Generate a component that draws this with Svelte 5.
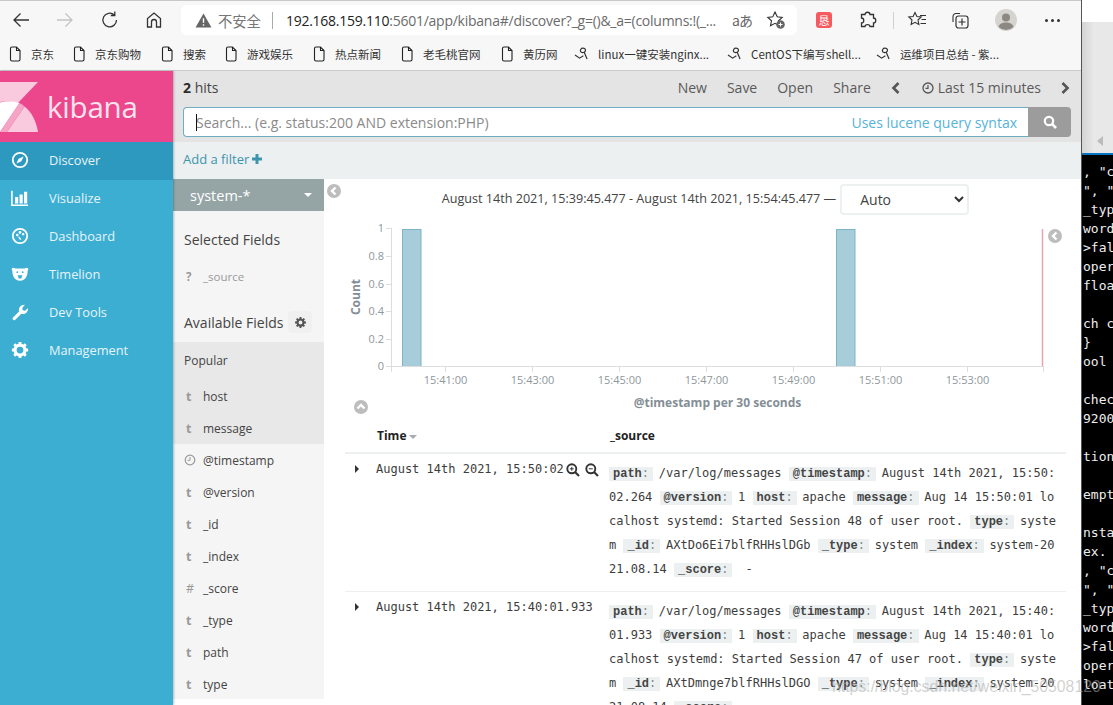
<script>
  const bookmarks = [
    { t: '京东', w: 42 }, { t: '京东购物', w: 66 }, { t: '搜索', w: 42 }, { t: '游戏娱乐', w: 66 },
    { t: '热点新闻', w: 66 }, { t: '老毛桃官网', w: 78 }
  ];
  const nav = ['Discover', 'Visualize', 'Dashboard', 'Timelion', 'Dev Tools', 'Management'];
  const popular = [['t', 'host'], ['t', 'message']];
  const fields = [['c', '@timestamp'], ['t', '@version'], ['t', '_id'], ['t', '_index'], ['#', '_score'], ['t', '_type'], ['t', 'path'], ['t', 'type']];
  const yTicks = [['1', 228], ['0.8', 256], ['0.6', 284], ['0.4', 311], ['0.2', 339], ['0', 366]];
  const xTicks = [['15:41:00', 445.5], ['15:43:00', 532.5], ['15:45:00', 619.5], ['15:47:00', 706.5], ['15:49:00', 793.5], ['15:51:00', 880.5], ['15:53:00', 967.5]];
  const rows = [
    { time: 'August 14th 2021, 15:50:02', tools: true, ts: 'August 14th 2021, 15:50:02.264', msg: 'Aug 14 15:50:01 localhost systemd: Started Session 48 of user root.', id: 'AXtDo6Ei7blfRHHslDGb' },
    { time: 'August 14th 2021, 15:40:01.933', tools: false, ts: 'August 14th 2021, 15:40:01.933', msg: 'Aug 14 15:40:01 localhost systemd: Started Session 47 of user root.', id: 'AXtDmnge7blfRHHslDGO' }
  ];
  const term = [', "c', '", "', '_typ', 'word', '>fal', 'oper', 'floa', '', 'ch c', '}', 'ool', '', 'chec', '9200', '', 'tion', '', 'empt', '', 'nsta', 'ex.', ', "c', '", "', '_typ', 'word', '>fal', 'oper', 'loat'];
</script>

<div class="screen">
  <div class="browser">
    <div class="toolbar">
      <div class="navbtns">
        <svg viewBox="0 0 20 20" class="ic"><path d="M18 10H3M9.500 3.500 3 10l6.500 6.500" fill="none" stroke="#333" stroke-width="1.300"/></svg>
        <svg viewBox="0 0 20 20" class="ic"><path d="M2 10h15M10.500 3.500 17 10l-6.500 6.500" fill="none" stroke="#c4c4c4" stroke-width="1.300"/></svg>
        <svg viewBox="0 0 20 20" class="ic"><path d="M16.500 10a6.800 6.800 0 1 1-2.200-5M14.800 1.500v4h-4" fill="none" stroke="#333" stroke-width="1.300"/></svg>
        <svg viewBox="0 0 20 20" class="ic"><path d="M3.500 17V8.500L10 3l6.500 5.500V17h-4v-5a2.500 2.500 0 0 0-5 0v5z" fill="none" stroke="#333" stroke-width="1.300"/></svg>
      </div>
      <div class="addr">
        <svg viewBox="0 0 18 16" class="warn"><path d="M9 0.500 17.500 15.500H0.500z" fill="#666"/><path d="M9 5.500v5M9 12v1.600" stroke="#fff" stroke-width="1.500"/></svg>
        <span class="insecure">不安全</span>
        <span class="sep"></span>
        <span class="url"><b>192.168.159.110</b>:5601/app/kibana#/discover?_g=()&amp;_a=(columns:!(_...</span>
        <span class="aa">aあ</span>
        <svg viewBox="0 0 20 20" class="star"><path d="M9 2l2.200 4.800 5 .6-3.700 3.400 1 5L9 13.300 4.500 15.800l1-5L1.800 7.400l5-.6z" fill="none" stroke="#333" stroke-width="1.100"/><circle cx="14.500" cy="14.500" r="4.300" fill="#666"/><path d="M14.500 12.500v4M12.500 14.500h4" stroke="#fff"/></svg>
      </div>
      <div class="exts">
        <span class="redext">恳</span>
        <svg viewBox="0 0 20 20" class="ic puzzle"><path d="M7 4.500c0-3 5-3 5 0h3.500v3.500c3 0 3 5 0 5v3.500H12c0-2.500-5-2.500-5 0H3.500V13c3 0 3-5 0-5V4.500z" fill="none" stroke="#333" stroke-width="1.300"/></svg>
        <span class="vdiv"></span>
        <svg viewBox="0 0 20 20" class="ic fav"><path d="M8 2.500l1.900 4 4.300.5-3.200 3 .9 4.500L8 12.300 4.100 14.500l.9-4.500L1.800 7l4.300-.5z" fill="none" stroke="#333" stroke-width="1.100"/><path d="M13 5.500h6M14.500 9.500h4.500M13.500 13.500h5.500" stroke="#333" stroke-width="1.100"/></svg>
        <svg viewBox="0 0 20 20" class="ic coll"><path d="M3 12V6.500a3 3 0 0 1 3-3h4" fill="none" stroke="#333" stroke-width="1.100"/><rect x="6" y="6" width="12" height="12" rx="2.500" fill="none" stroke="#333" stroke-width="1.200"/><path d="M12 8.500v7M8.500 12h7" stroke="#333" stroke-width="1.200"/></svg>
        <svg viewBox="0 0 22 22" class="avatar"><circle cx="11" cy="11" r="11" fill="#d5d4d0"/><circle cx="11" cy="8.500" r="4" fill="#8c8983"/><path d="M3.500 18c1-3.500 4-4.500 7.500-4.500s6.500 1 7.500 4.500a11 11 0 0 1-15 0z" fill="#8c8983"/></svg>
        <span class="dots"><i></i><i></i><i></i></span>
      </div>
    </div>

    <div class="bookmarks">
      {#each bookmarks as b}
        <span class="bm" style="width:{b.w}px">
          <svg viewBox="0 0 12 16" class="doc"><path d="M1.500 2.500a1.500 1.500 0 0 1 1.500-1.500h4.500l3.500 3.500v9a1.500 1.500 0 0 1-1.500 1.500H3a1.500 1.500 0 0 1-1.500-1.500zM7.500 1v3.500H11" fill="none" stroke="#222" stroke-width="1.100"/></svg>
          <span>{b.t}</span>
        </span>
      {/each}
      <span class="bm hl">
        <svg viewBox="0 0 12 16" class="doc"><path d="M1.500 2.500a1.500 1.500 0 0 1 1.500-1.500h4.500l3.500 3.500v9a1.500 1.500 0 0 1-1.500 1.500H3a1.500 1.500 0 0 1-1.500-1.500zM7.500 1v3.500H11" fill="none" stroke="#222" stroke-width="1.100"/></svg>
        <span>黄历网</span>
      </span>
      {#each ['linux一键安装nginx...', 'CentOS下编写shell...', '运维项目总结 - 紫...'] as t}
        <span class="bm link">
          <svg viewBox="0 0 16 14" class="cs"><path d="M1 8.500 6 12l4-2.500M8 1.500c2.500-1 5 .5 4 3-.6 1.500-3 2-4.500 1-1.200-.9-.6-3.300.5-4zM11 6l3 7" fill="none" stroke="#333" stroke-width="1.300"/></svg>
          <span>{t}</span>
        </span>
      {/each}
    </div>

    <div class="kibana">
      <aside class="side">
        <div class="logo">
          <svg viewBox="0 0 38 50" class="mark">
            <path d="M0 0H38L18 21C12 19 6 19 0 20z" fill="#f9c9dd"/>
            <path d="M0 20.500C7 18.500 14 19 19.500 21L0 50z" fill="#fff"/>
            <path d="M24.500 24.500C31 29.500 36 38 38 50H7z" fill="#f9c9dd"/>
            <path d="M19.500 21c2 .8 3.500 2 5 3.500L7 50H0z" fill="#f5a4c6"/>
          </svg>
          <span>kibana</span>
        </div>
        <nav>
          {#each nav as n, i}
            <div class="navitem" class:active={i === 0}>
              <svg viewBox="0 0 20 20" class="navic">
                {#if i === 0}
                  <circle cx="10" cy="10" r="8" fill="none" stroke="#fff" stroke-width="2"/><path d="M14 6l-2.500 5.500L6 14l2.500-5.500z" fill="#fff"/>
                {:else if i === 1}
                  <path d="M1 2v16h18" fill="none" stroke="#fff" stroke-width="1.800"/><path d="M4.500 9h3.500v7H4.500zM9.500 6H13v10H9.500zM14.500 3H18v13h-3.500z" fill="#fff"/>
                {:else if i === 2}
                  <circle cx="10" cy="10" r="8" fill="none" stroke="#fff" stroke-width="2"/><circle cx="7" cy="9" r="1.500" fill="#fff"/><circle cx="10" cy="6" r="1.500" fill="#fff"/><circle cx="13.500" cy="8" r="1.300" fill="#fff"/><path d="M9 10.500l2.500 3-1.500 1-2-3z" fill="#fff"/>
                {:else if i === 3}
                  <path d="M1 4c1-1.500 2.500-1 3.500 0h11c1-1 2.500-1.500 3.500 0 .5 1 0 2-.5 2.500 0 5-2 11-8.500 11S1.500 11.500 1.500 6.500C1 6 .5 5 1 4z" fill="#fff"/><circle cx="7" cy="8" r="1" fill="#3caed2"/><circle cx="13" cy="8" r="1" fill="#3caed2"/><path d="M7.500 11.500h5l-1 3.500h-3z" fill="#3caed2"/>
                {:else if i === 4}
                  <path d="M2 16.500 9 9.500C8 6 10.500 1.500 15.500 2L12.500 5.500l.5 2.500 2.500.5L19 5.500c.3 5-4 7.500-7.500 6.500l-7 7c-1.500 1-3.500-1-2.500-2.500z" fill="#fff"/>
                {:else}
                  <circle cx="10" cy="10" r="5.500" fill="none" stroke="#fff" stroke-width="3.500"/>
                  <path d="M10 1v3M10 16v3M1 10h3M16 10h3M3.600 3.600l2.200 2.200M14.200 14.200l2.200 2.200M3.600 16.400l2.200-2.200M14.200 5.800l2.200-2.200" stroke="#fff" stroke-width="3.200"/>
                {/if}
              </svg>
              <span>{n}</span>
            </div>
          {/each}
        </nav>
      </aside>

      <main class="app">
        <header class="topbar">
          <div class="toprow">
            <span class="hits"><b>2</b> hits</span>
            <div class="menu">
              <span>New</span><span>Save</span><span>Open</span><span>Share</span>
              <svg viewBox="0 0 10 14" class="chev first"><path d="M7.500 2 2.500 7l5 5" fill="none" stroke="#555" stroke-width="2.600"/></svg>
              <span class="timepick">
                <svg viewBox="0 0 12 12" class="clock"><circle cx="6" cy="6" r="5" fill="none" stroke="#555" stroke-width="1.300"/><path d="M6 3v3.300H3.500" fill="none" stroke="#555" stroke-width="1.200"/></svg>
                Last 15 minutes
              </span>
              <svg viewBox="0 0 10 14" class="chev last"><path d="M2.500 2l5 5-5 5" fill="none" stroke="#555" stroke-width="2.600"/></svg>
            </div>
          </div>
          <div class="search">
            <div class="input">
              <i class="cursor"></i>
              <span class="ph">Search... (e.g. status:200 AND extension:PHP)</span>
              <span class="lucene">Uses lucene query syntax</span>
            </div>
            <div class="sbtn">
              <svg viewBox="0 0 14 14" width="14" height="14"><circle cx="6" cy="6" r="4.200" fill="none" stroke="#fff" stroke-width="2.200"/><path d="M9.200 9.200 13 13" stroke="#fff" stroke-width="2.600"/></svg>
            </div>
          </div>
        </header>
        <div class="filter">Add a filter <svg viewBox="0 0 10 10" width="10" height="10"><path d="M5 0v10M0 5h10" stroke="#3d94ad" stroke-width="3"/></svg></div>

        <div class="body">
          <section class="fields">
            <div class="pattern"><span>system-*</span><i class="tri"></i></div>
            <h3 class="sel">Selected Fields</h3>
            <div class="srcfield"><b>?</b><span>_source</span></div>
            <div class="avail"><h3>Available Fields</h3>
              <span class="gearbtn"><svg viewBox="0 0 20 20" width="11" height="11"><circle cx="10" cy="10" r="5.500" fill="none" stroke="#555" stroke-width="4"/><path d="M10 0v4M10 16v4M0 10h4M16 10h4M3 3l3 3M14 14l3 3M3 17l3-3M14 6l3-3" stroke="#555" stroke-width="3.500"/></svg></span>
            </div>
            <div class="popular">
              <div class="pophead">Popular</div>
              {#each popular as f}
                <div class="frow"><b>{f[0]}</b><span>{f[1]}</span></div>
              {/each}
            </div>
            {#each fields as f}
              <div class="frow">
                {#if f[0] === 'c'}
                  <svg viewBox="0 0 12 12" class="fclock"><circle cx="6" cy="6" r="4.800" fill="none" stroke="#999" stroke-width="1.200"/><path d="M6 3v3.300H3.500" fill="none" stroke="#999"/></svg>
                {:else}
                  <b class:hash={f[0] === '#'}>{f[0]}</b>
                {/if}
                <span>{f[1]}</span>
              </div>
            {/each}
          </section>

          <section class="content">
            <div class="round left1"><svg viewBox="0 0 14 14"><circle cx="7" cy="7" r="7" fill="#bdbdbd"/><path d="M8.500 3.500 5 7l3.500 3.500" fill="none" stroke="#fff" stroke-width="2.400"/></svg></div>
            <div class="round left2"><svg viewBox="0 0 14 14"><circle cx="7" cy="7" r="7" fill="#bdbdbd"/><path d="M8.500 3.500 5 7l3.500 3.500" fill="none" stroke="#fff" stroke-width="2.400"/></svg></div>
            <div class="round up"><svg viewBox="0 0 14 14"><circle cx="7" cy="7" r="7" fill="#bdbdbd"/><path d="M3.500 8.500 7 5l3.500 3.500" fill="none" stroke="#fff" stroke-width="2.400"/></svg></div>

            <div class="range">
              <span>August 14th 2021, 15:39:45.477 - August 14th 2021, 15:54:45.477 —</span>
              <div class="selwrap">
                <select><option>Auto</option></select>
                <svg viewBox="0 0 10 7" class="selchev"><path d="M1 1l4 4 4-4" fill="none" stroke="#333" stroke-width="2"/></svg>
              </div>
            </div>

            <svg class="chart" viewBox="345 220 721 200" width="721" height="200">
              <rect x="402.500" y="229.500" width="18.500" height="137" fill="#a6cdd9" stroke="#7db5c6"/>
              <rect x="836.500" y="229.500" width="18.500" height="137" fill="#a6cdd9" stroke="#7db5c6"/>
              <path d="M391.500 228.500V366.500H1043" fill="none" stroke="#ddd"/>
              <path d="M391.500 366v6M1043.500 366v6" stroke="#ddd"/>
              {#each yTicks as t}
                <path d="M386 {t[1] + .5}h6" stroke="#ddd"/>
                <text x="384" y={t[1] + 4} text-anchor="end" class="tick">{t[0]}</text>
              {/each}
              {#each xTicks as t}
                <path d="M{t[1]} 366v6" stroke="#ddd"/>
                <text x={t[1]} y="384" text-anchor="middle" class="tick">{t[0]}</text>
              {/each}
              <path d="M1042.500 229v137" stroke="#e8a4ac" stroke-width="1.500"/>
              <text x="360" y="297" transform="rotate(-90 360 297)" text-anchor="middle" class="axis">Count</text>
              <text x="717.500" y="407" text-anchor="middle" class="axis">@timestamp per 30 seconds</text>
            </svg>

            <div class="thead">
              <span class="th timeh">Time <i class="sort"></i></span>
              <span class="th">_source</span>
            </div>

            {#each rows as r}
              <article class="row">
                <svg viewBox="0 0 6 8" class="caret"><path d="M1 0l4 4-4 4z" fill="#333"/></svg>
                <div class="tcell">
                  <span>{r.time}</span>
                  {#if r.tools}
                    <span class="tools">
                      <svg viewBox="0 0 14 14"><circle cx="5.800" cy="5.800" r="4.500" fill="none" stroke="#333" stroke-width="1.900"/><path d="M9 9l4 4" stroke="#333" stroke-width="2.200"/><path d="M5.800 3.800v4M3.800 5.800h4" stroke="#333"/></svg>
                      <svg viewBox="0 0 14 14"><circle cx="5.800" cy="5.800" r="4.500" fill="none" stroke="#333" stroke-width="1.900"/><path d="M9 9l4 4" stroke="#333" stroke-width="2.200"/><path d="M3.800 5.800h4" stroke="#333"/></svg>
                    </span>
                  {/if}
                </div>
                <div class="src"><span class="k">path<i>:</i></span> /var/log/messages <span class="k">@timestamp<i>:</i></span> {r.ts} <span class="k">@version<i>:</i></span> 1 <span class="k">host<i>:</i></span> apache <span class="k">message<i>:</i></span> {r.msg} <span class="k">type<i>:</i></span> system <span class="k">_id<i>:</i></span> {r.id} <span class="k">_type<i>:</i></span> system <span class="k">_index<i>:</i></span> system-2021.08.14 <span class="k">_score<i>:</i></span> &nbsp;-</div>
              </article>
            {/each}
          </section>
        </div>
      </main>
    </div>
  </div>

  <div class="desktop">
    <div class="deskbar"><svg viewBox="0 0 6 10" width="6" height="10"><path d="M6 0v10L0 5z" fill="#bbb"/></svg></div>
    <div class="terminal">
      {#each term as l}<div class="tl">{l || ' '}</div>{/each}
    </div>
  </div>

  <div class="watermark">https://blog.csdn.net/weixin_50508120</div>
</div>

<style>
  :global(body) { margin: 0; background: #fff; }
  .screen { width: 1113px; height: 705px; display: flex; overflow: hidden; position: relative; font-family: "Open Sans", sans-serif; }
  .browser { width: 1081px; flex: none; display: flex; flex-direction: column; background: #f7f7f7; border-top: 1px solid #c8c8c8; box-sizing: border-box; height: 705px; overflow: hidden; box-shadow: 1px 0 0 #555; position: relative; z-index: 1; }

  .toolbar { height: 36px; padding-top: 2px; box-sizing: border-box; display: flex; align-items: center; flex: none; }
  .navbtns { display: flex; gap: 24.300px; padding-left: 11px; width: 181px; box-sizing: border-box; }
  .ic { width: 20px; height: 20px; flex: none; }
  .addr { width: 616px; height: 30px; background: #fff; border-radius: 6px; display: flex; align-items: center; flex: none; position: relative; }
  .warn { width: 17px; height: 15px; margin-left: 14px; flex: none; }
  .insecure { font: 14.300px "Noto Sans CJK SC", sans-serif; color: #777; margin-left: 6px; }
  .sep { width: 1px; height: 17px; background: #aaa; margin-left: 11px; }
  .url { font: 14px "Open Sans", sans-serif; color: #6b6b6b; margin-left: 13px; white-space: nowrap; letter-spacing: -.25px; }
  .url b { font-weight: 400; color: #222; }
  .aa { position: absolute; left: 551px; font: 14px "Noto Sans CJK JP", sans-serif; color: #666; letter-spacing: -1px; }
  .star { position: absolute; left: 585px; top: 5px; width: 20px; height: 20px; }
  .exts { flex: 1; position: relative; display: flex; align-items: center; }
  .redext { width: 16px; height: 16px; background: #f55a5f; border-radius: 3px; color: #fff; font: 11px/16px "Noto Sans CJK SC", sans-serif; text-align: center; margin-left: 19px; flex: none; }
  .puzzle { margin-left: 26px; }
  .vdiv { width: 1px; height: 17px; background: #d0d0d0; margin-left: 15px; flex: none; }
  .fav { margin-left: 13px; }
  .coll { margin-left: 23px; }
  .avatar { width: 22px; height: 22px; margin-left: 25px; flex: none; }
  .dots { display: flex; gap: 3px; margin-left: 28px; }
  .dots i { width: 3px; height: 3px; border-radius: 50%; background: #333; }

  .bookmarks { height: 34px; border-bottom: 1px solid #ccc; box-sizing: border-box; display: flex; align-items: center; padding-left: 9px; gap: 22px; flex: none; font: 11.500px "Noto Sans CJK SC", sans-serif; color: #333; white-space: nowrap; }
  .bm { display: inline-flex; align-items: center; gap: 10px; flex: none; }
  .hl { width: 51px; }
  .link { gap: 9px; }
  .link + .link { margin-left: -4px; }
  .link + .link + .link { margin-left: -7px; }
  .doc { width: 12px; height: 16px; flex: none; }
  .cs { width: 15px; height: 13px; flex: none; }

  .kibana { flex: 1; display: flex; min-height: 0; }
  .side { width: 173px; flex: none; background: #3caed2; color: #fff; box-shadow: 1px 0 2px rgba(0,0,0,.25); position: relative; z-index: 2; }
  .logo { height: 71px; background: #ec468c; display: flex; align-items: center; overflow: hidden; }
  .mark { width: 38px; height: 50px; margin-top: 1px; flex: none; }
  .logo span { color: #fce4ee; font-size: 29.500px; margin-left: 9px; line-height: 1; letter-spacing: -.2px; }
  .navitem { height: 38px; box-sizing: border-box; padding-bottom: 2px; display: flex; align-items: center; padding-left: 11px; font-size: 12.800px; color: #e6f4f9; }
  .navitem.active { background: #2e99bf; }
  .navic { width: 18px; height: 18px; margin-right: 20px; flex: none; }

  .app { flex: 1; min-width: 0; display: flex; flex-direction: column; background: #fff; }
  .topbar { background: #e4e4e4; height: 71px; padding: 0 10px; flex: none; box-sizing: border-box; }
  .toprow { display: flex; justify-content: space-between; height: 33px; margin-bottom: 3px; align-items: center; color: #555; font-size: 14px; }
  .hits { color: #444; }
  .hits b { color: #2d2d2d; }
  .menu { display: flex; align-items: center; color: #5a5a5a; }
  .menu span { margin-right: 20px; }
  .chev { width: 10px; height: 14px; flex: none; }
  .chev.first { margin-right: 21px; }
  .chev.last { margin: 0 1px 0 -1px; }
  .menu .timepick { margin-right: 20px; display: inline-flex; align-items: center; gap: 4px; }
  .clock { width: 12px; height: 12px; }
  .search { display: flex; height: 30px; }
  .input { flex: 1; background: #fff; border: 1px solid #6eadc1; border-right: 0; border-radius: 4px 0 0 4px; display: flex; align-items: center; justify-content: space-between; padding: 0 11px 0 12px; position: relative; box-sizing: border-box; }
  .cursor { position: absolute; left: 12px; top: 6px; width: 1px; height: 17px; background: #111; }
  .ph { color: #8a8a8a; font-size: 14px; }
  .lucene { color: #56b3d8; font-size: 14px; }
  .sbtn { width: 43px; background: #9c9c9c; border-radius: 0 4px 4px 0; display: flex; align-items: center; justify-content: center; }
  .filter { height: 37px; background: #ecf0f1; color: #3d94ad; font-size: 13px; line-height: 35px; padding-left: 10px; flex: none; }
  .filter svg { margin-left: -1px; }

  .body { flex: 1; display: flex; min-height: 0; }
  .fields { width: 151px; flex: none; background: #f5f5f5; height: 520px; font-size: 12.500px; color: #444; }
  .pattern { height: 32px; background: #95a5a6; color: #fff; display: flex; align-items: center; justify-content: space-between; padding: 0 12px 0 17px; font-size: 14.500px; }
  .tri { width: 0; height: 0; border: 4px solid transparent; border-top-color: #fff; border-bottom: 0; }
  .fields h3 { font-size: 14px; font-weight: 400; margin: 0; color: #444; }
  .sel { padding: 20px 0 0 11px; line-height: 18px; }
  .srcfield { display: flex; margin-top: 19px; padding-left: 13px; color: #999; font-size: 11.500px; line-height: 18px; }
  .srcfield b { width: 17px; color: #999; }
  .avail { display: flex; align-items: center; padding-left: 11px; margin-top: 24px; height: 24px; }
  .gearbtn { width: 24px; height: 22px; background: #f0f0f0; border-radius: 4px; margin-left: 5px; display: flex; align-items: center; justify-content: center; }
  .popular { background: #e8e8e8; margin-top: 8px; }
  .pophead { height: 38px; line-height: 37px; padding-left: 11px; font-size: 12px; }
  .frow { height: 32px; display: flex; align-items: center; padding-left: 13px; }
  .frow b { width: 17px; color: #999; font-size: 12.500px; flex: none; }
  .frow b.hash { font-weight: 400; }
  .frow span { font-size: 12px; color: #444; }
  .fclock { width: 12px; height: 12px; margin-left: -2px; margin-right: 7px; flex: none; }

  .content { flex: 1; min-width: 0; position: relative; padding: 0 15px 0 21px; overflow: hidden; }
  .round { position: absolute; width: 14px; height: 14px; }
  .round svg { display: block; width: 14px; height: 14px; }
  .left1 { left: 3px; top: 5px; }
  .left2 { left: 724px; top: 50px; }
  .up { left: 30px; top: 221px; }
  .range { height: 41px; display: flex; align-items: flex-start; justify-content: center; gap: 4px; font-size: 12.600px; line-height: 17px; color: #444; box-sizing: border-box; }
  .range > span { margin-top: 10.500px; }
  .selwrap { position: relative; }
  select { appearance: none; display: block; width: 129px; height: 31px; border: 2px solid #ecf0f1; border-radius: 4px; background: #fff; font: 14px "Open Sans", sans-serif; color: #444; padding-left: 18px; margin-top: 5px; }
  .selchev { position: absolute; right: 5px; top: 17px; width: 10px; height: 7px; }
  .chart { display: block; }
  .tick { font-size: 11px; fill: #8f979c; font-family: "Open Sans", sans-serif; }
  .axis { font-size: 12px; font-weight: 700; fill: #848e96; font-family: "Open Sans", sans-serif; }
  .thead { height: 34px; border-bottom: 2px solid #ecf0f1; display: grid; grid-template-columns: 233px 1fr; padding: 7px 0 0 32px; box-sizing: border-box; font-size: 12px; color: #222; }
  .th { font-weight: 700; line-height: 18px; }
  .sort { display: inline-block; width: 0; height: 0; border: 4px solid transparent; border-top-color: #aaa; border-bottom: 0; vertical-align: 1px; margin-left: -1px; }
  .row { display: grid; grid-template-columns: 31px 233px 1fr; border-bottom: 1px solid #ecf0f1; padding-top: 7px; padding-bottom: 10px; font: 12px "DejaVu Sans Mono", monospace; color: #3d3d3d; }
  .caret { width: 6px; height: 8px; margin: 4px 0 0 9px; }
  .tcell { line-height: 16px; position: relative; white-space: nowrap; }
  .tools { position: absolute; left: 190px; top: 2px; display: flex; gap: 5px; }
  .tools svg { width: 14px; height: 14px; }
  .src { line-height: 24px; word-break: break-all; width: 450px; }
  .k { background: #ecf0f1; padding: 0 4px; margin-right: -1.500px; line-height: 1; font-family: "Liberation Mono", monospace; font-weight: 700; color: #444; }
  .k i { font-style: normal; font-weight: 400; color: #888; }

  .desktop { flex: 1; display: flex; flex-direction: column; min-width: 0; overflow: hidden; background: linear-gradient(#fff 22px, transparent 22px); }
  .deskbar { height: 133px; margin-top: 22px; background: linear-gradient(90deg, #d2d2d2, #e8e8e8 40%); border-bottom: 2px solid #0a74c4; display: flex; align-items: flex-end; padding: 0 0 7px 16px; box-sizing: border-box; }
  .terminal { flex: 1; background: #000; color: #eee; font: 13px/19px "DejaVu Sans Mono", monospace; white-space: pre; padding: 7px 0 0 2px; }
  .tl { height: 19px; }

  .watermark { position: absolute; left: 832px; top: 678px; z-index: 5; font: 15.800px "Liberation Sans", sans-serif; color: rgba(170,170,170,.55); white-space: nowrap; }
</style>
